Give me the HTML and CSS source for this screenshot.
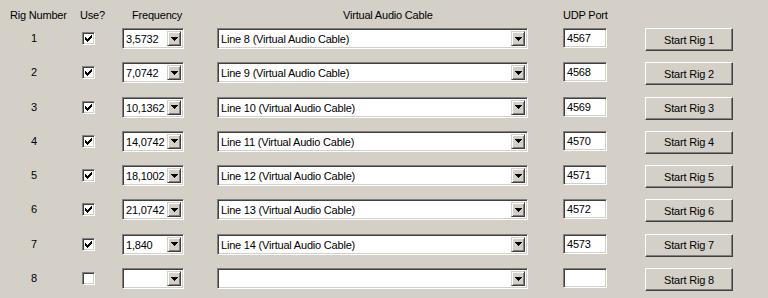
FILE: index.html
```html
<!DOCTYPE html>
<html lang="en">
<head>
    <meta charset="UTF-8">
    <title>Rig Setup</title>
    <link rel="stylesheet" href="styles.css">
</head>
<body>
    <div class="rigs">
        <div class="rig-head">
            <span class="head-num">Rig Number</span>
            <span class="head-use">Use?</span>
            <span class="head-freq">Frequency</span>
            <span class="head-vac">Virtual Audio Cable</span>
            <span class="head-udp">UDP Port</span>
        </div>

        <div class="rig-row">
            <span class="rig-num">1</span>
            <span class="check"><svg viewBox="0 0 7 7"><path d="M0 2h1v3H0zM1 3h1v3H1zM2 4h1v3H2zM3 3h1v3H3zM4 2h1v3H4zM5 1h1v3H5zM6 0h1v3H6z"/></svg></span>
            <div class="combo freq"><span class="combo-text">3,5732</span><span class="combo-btn"><svg viewBox="0 0 7 4"><path d="M0 0h7v1H0zM1 1h5v1H1zM2 2h3v1H2zM3 3h1v1H3z"/></svg></span></div>
            <div class="combo vac"><span class="combo-text">Line 8 (Virtual Audio Cable)</span><span class="combo-btn"><svg viewBox="0 0 7 4"><path d="M0 0h7v1H0zM1 1h5v1H1zM2 2h3v1H2zM3 3h1v1H3z"/></svg></span></div>
            <div class="edit">4567</div>
            <button class="btn">Start Rig 1</button>
        </div>

        <div class="rig-row">
            <span class="rig-num">2</span>
            <span class="check"><svg viewBox="0 0 7 7"><path d="M0 2h1v3H0zM1 3h1v3H1zM2 4h1v3H2zM3 3h1v3H3zM4 2h1v3H4zM5 1h1v3H5zM6 0h1v3H6z"/></svg></span>
            <div class="combo freq"><span class="combo-text">7,0742</span><span class="combo-btn"><svg viewBox="0 0 7 4"><path d="M0 0h7v1H0zM1 1h5v1H1zM2 2h3v1H2zM3 3h1v1H3z"/></svg></span></div>
            <div class="combo vac"><span class="combo-text">Line 9 (Virtual Audio Cable)</span><span class="combo-btn"><svg viewBox="0 0 7 4"><path d="M0 0h7v1H0zM1 1h5v1H1zM2 2h3v1H2zM3 3h1v1H3z"/></svg></span></div>
            <div class="edit">4568</div>
            <button class="btn">Start Rig 2</button>
        </div>

        <div class="rig-row">
            <span class="rig-num">3</span>
            <span class="check"><svg viewBox="0 0 7 7"><path d="M0 2h1v3H0zM1 3h1v3H1zM2 4h1v3H2zM3 3h1v3H3zM4 2h1v3H4zM5 1h1v3H5zM6 0h1v3H6z"/></svg></span>
            <div class="combo freq"><span class="combo-text">10,1362</span><span class="combo-btn"><svg viewBox="0 0 7 4"><path d="M0 0h7v1H0zM1 1h5v1H1zM2 2h3v1H2zM3 3h1v1H3z"/></svg></span></div>
            <div class="combo vac"><span class="combo-text">Line 10 (Virtual Audio Cable)</span><span class="combo-btn"><svg viewBox="0 0 7 4"><path d="M0 0h7v1H0zM1 1h5v1H1zM2 2h3v1H2zM3 3h1v1H3z"/></svg></span></div>
            <div class="edit">4569</div>
            <button class="btn">Start Rig 3</button>
        </div>

        <div class="rig-row">
            <span class="rig-num">4</span>
            <span class="check"><svg viewBox="0 0 7 7"><path d="M0 2h1v3H0zM1 3h1v3H1zM2 4h1v3H2zM3 3h1v3H3zM4 2h1v3H4zM5 1h1v3H5zM6 0h1v3H6z"/></svg></span>
            <div class="combo freq"><span class="combo-text">14,0742</span><span class="combo-btn"><svg viewBox="0 0 7 4"><path d="M0 0h7v1H0zM1 1h5v1H1zM2 2h3v1H2zM3 3h1v1H3z"/></svg></span></div>
            <div class="combo vac"><span class="combo-text">Line 11 (Virtual Audio Cable)</span><span class="combo-btn"><svg viewBox="0 0 7 4"><path d="M0 0h7v1H0zM1 1h5v1H1zM2 2h3v1H2zM3 3h1v1H3z"/></svg></span></div>
            <div class="edit">4570</div>
            <button class="btn">Start Rig 4</button>
        </div>

        <div class="rig-row">
            <span class="rig-num">5</span>
            <span class="check"><svg viewBox="0 0 7 7"><path d="M0 2h1v3H0zM1 3h1v3H1zM2 4h1v3H2zM3 3h1v3H3zM4 2h1v3H4zM5 1h1v3H5zM6 0h1v3H6z"/></svg></span>
            <div class="combo freq"><span class="combo-text">18,1002</span><span class="combo-btn"><svg viewBox="0 0 7 4"><path d="M0 0h7v1H0zM1 1h5v1H1zM2 2h3v1H2zM3 3h1v1H3z"/></svg></span></div>
            <div class="combo vac"><span class="combo-text">Line 12 (Virtual Audio Cable)</span><span class="combo-btn"><svg viewBox="0 0 7 4"><path d="M0 0h7v1H0zM1 1h5v1H1zM2 2h3v1H2zM3 3h1v1H3z"/></svg></span></div>
            <div class="edit">4571</div>
            <button class="btn">Start Rig 5</button>
        </div>

        <div class="rig-row">
            <span class="rig-num">6</span>
            <span class="check"><svg viewBox="0 0 7 7"><path d="M0 2h1v3H0zM1 3h1v3H1zM2 4h1v3H2zM3 3h1v3H3zM4 2h1v3H4zM5 1h1v3H5zM6 0h1v3H6z"/></svg></span>
            <div class="combo freq"><span class="combo-text">21,0742</span><span class="combo-btn"><svg viewBox="0 0 7 4"><path d="M0 0h7v1H0zM1 1h5v1H1zM2 2h3v1H2zM3 3h1v1H3z"/></svg></span></div>
            <div class="combo vac"><span class="combo-text">Line 13 (Virtual Audio Cable)</span><span class="combo-btn"><svg viewBox="0 0 7 4"><path d="M0 0h7v1H0zM1 1h5v1H1zM2 2h3v1H2zM3 3h1v1H3z"/></svg></span></div>
            <div class="edit">4572</div>
            <button class="btn">Start Rig 6</button>
        </div>

        <div class="rig-row">
            <span class="rig-num">7</span>
            <span class="check"><svg viewBox="0 0 7 7"><path d="M0 2h1v3H0zM1 3h1v3H1zM2 4h1v3H2zM3 3h1v3H3zM4 2h1v3H4zM5 1h1v3H5zM6 0h1v3H6z"/></svg></span>
            <div class="combo freq"><span class="combo-text">1,840</span><span class="combo-btn"><svg viewBox="0 0 7 4"><path d="M0 0h7v1H0zM1 1h5v1H1zM2 2h3v1H2zM3 3h1v1H3z"/></svg></span></div>
            <div class="combo vac"><span class="combo-text">Line 14 (Virtual Audio Cable)</span><span class="combo-btn"><svg viewBox="0 0 7 4"><path d="M0 0h7v1H0zM1 1h5v1H1zM2 2h3v1H2zM3 3h1v1H3z"/></svg></span></div>
            <div class="edit">4573</div>
            <button class="btn">Start Rig 7</button>
        </div>

        <div class="rig-row last">
            <span class="rig-num">8</span>
            <span class="check"></span>
            <div class="combo freq"><span class="combo-text"></span><span class="combo-btn"><svg viewBox="0 0 7 4"><path d="M0 0h7v1H0zM1 1h5v1H1zM2 2h3v1H2zM3 3h1v1H3z"/></svg></span></div>
            <div class="combo vac"><span class="combo-text"></span><span class="combo-btn"><svg viewBox="0 0 7 4"><path d="M0 0h7v1H0zM1 1h5v1H1zM2 2h3v1H2zM3 3h1v1H3z"/></svg></span></div>
            <div class="edit"></div>
            <button class="btn">Start Rig 8</button>
        </div>
    </div>
</body>
</html>
```

FILE: styles.css
```css
html, body {
    margin: 0;
    padding: 0;
    height: 100%;
}
body {
    background: #d4d0c8;  /* classic window face */
    font-family: "Liberation Sans", Arial, sans-serif;
    font-size: 11px;
    letter-spacing: -0.2px;
    color: #000;
    overflow: hidden;
}

/* column grid shared by header and rows */
.rig-head, .rig-row {
    display: grid;
    grid-template-columns: 82px 40px 95px 346px 82px 88px;
    align-items: start;
}
.rig-head {
    height: 28px;
    line-height: 13px;
    padding-top: 9px;
    box-sizing: border-box;
}
.head-num { padding-left: 10px; }
.head-use { margin-left: -2px; }
.head-freq { padding-left: 10px; }
.head-vac { padding-left: 126px; }
.head-udp { padding-left: 0; }

.rig-row {
    height: 34.3px;
}

.rig-num {
    line-height: 13px;
    margin-top: 4px;
    text-align: center;
    width: 68px;
}

/* sunken 3d edge */
.check, .combo, .edit {
    box-sizing: border-box;
    background: #fff;
    border: 1px solid;
    border-color: #808080 #fff #fff #808080;
    box-shadow: inset 1px 1px #404040, inset -1px -1px #d4d0c8;
}

.check {
    width: 13px;
    height: 13px;
    margin-top: 4px;
    padding: 2px;
    display: block;
}
.check svg {
    display: block;
    width: 7px;
    height: 7px;
    shape-rendering: crispEdges;
}

.combo {
    display: flex;
    height: 21px;
    padding: 2px;
}
.freq { width: 62px; }
.vac { width: 311px; }
.combo-text {
    flex: 1;
    line-height: 16px;
    padding-left: 1px;
    white-space: nowrap;
    overflow: hidden;
}
.combo-btn {
    width: 14px;
    box-sizing: border-box;
    background: #d4d0c8;
    border: 1px solid;
    border-color: #d4d0c8 #404040 #404040 #d4d0c8;
    box-shadow: inset 1px 1px #fff, inset -1px -1px #808080;
    display: flex;
    align-items: center;
    justify-content: center;
}
.combo-btn svg {
    width: 7px;
    height: 4px;
    shape-rendering: crispEdges;
}

.edit {
    width: 44px;
    height: 20px;
    padding: 2px 3px;
    line-height: 15px;
}

/* raised push button */
.btn {
    width: 88px;
    height: 23px;
    margin: 0;
    padding: 0;
    box-sizing: border-box;
    background: #d4d0c8;
    border: 1px solid;
    border-color: #fff #404040 #404040 #fff;
    box-shadow: inset -1px -1px #808080;
    font-family: inherit;
    font-size: 11px;
    letter-spacing: -0.2px;
    color: #000;
}
```
